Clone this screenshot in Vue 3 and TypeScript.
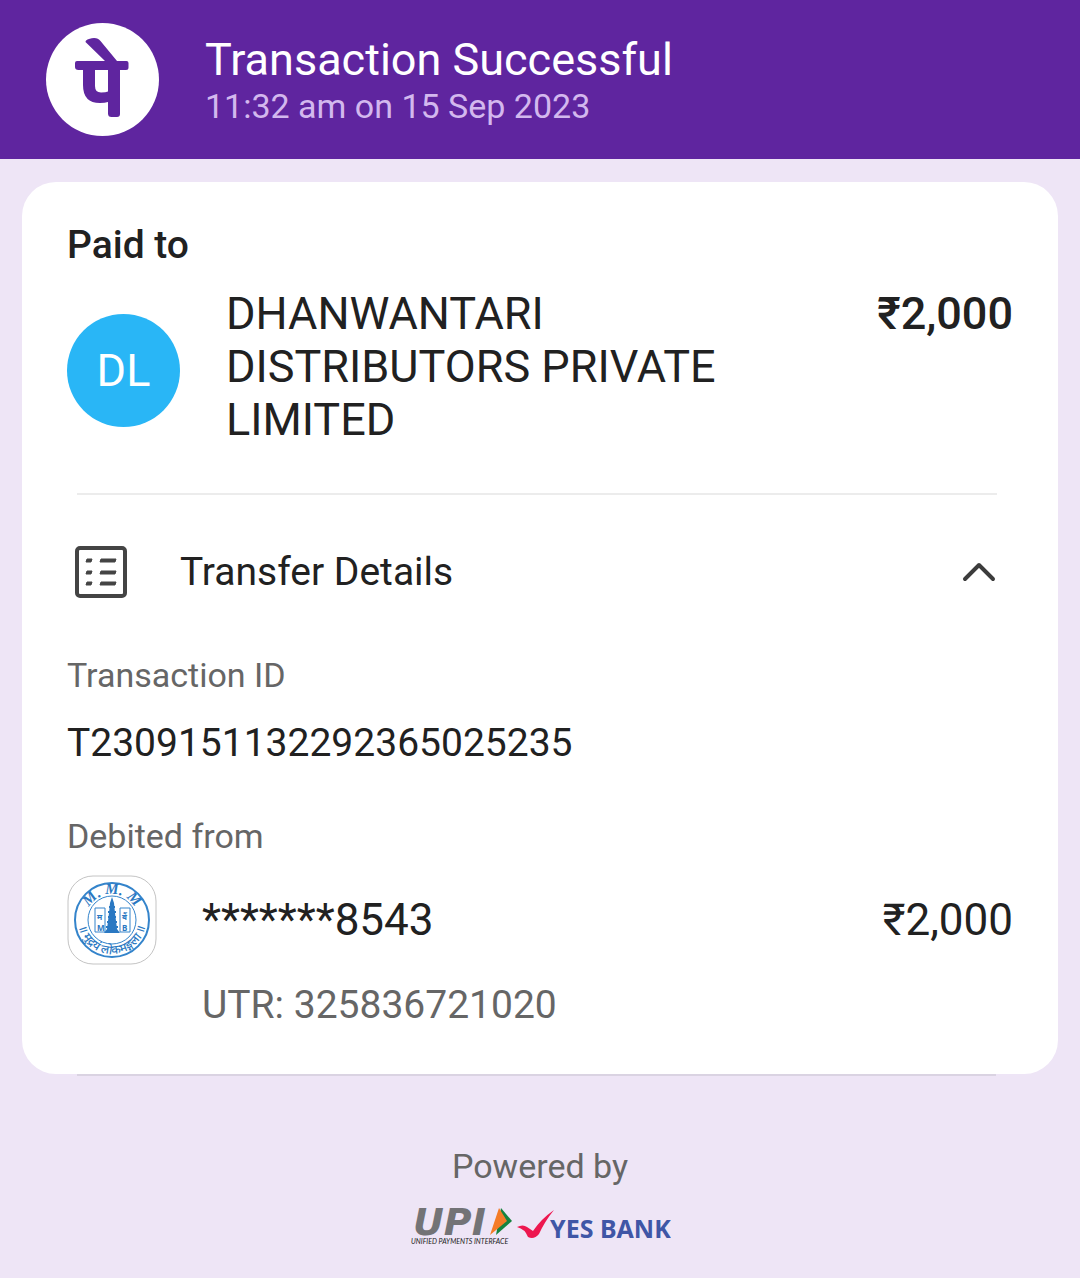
<script setup lang="ts">
import { ref } from 'vue'

const open = ref(true)

const payment = {
  status: 'Transaction Successful',
  time: '11:32 am on 15 Sep 2023',
  payee: 'DHANWANTARI DISTRIBUTORS PRIVATE LIMITED',
  initials: 'DL',
  amount: '₹2,000',
  id: 'T2309151132292365025235',
  account: '*******8543',
  utr: 'UTR: 325836721020',
}
</script>

<template>
  <div class="page">
    <header class="header">
      <svg class="brand" viewBox="0 0 226 226" role="img" aria-label="PhonePe">
        <circle cx="113" cy="113" r="113" fill="#fff" />
        <path fill="#5f259f" d="M79 38 Q79 34 86 32 Q102 27 109 36 L142 76 H161 Q165 76 165 80 V89 Q165 94 160 94 H148 V182 Q148 188 142 188 H131 Q124 188 124 181 V158 Q118 160 108 160 Q74 160 74 124 V94 H65 Q58 94 58 88 V80 Q58 76 62 76 H118 Z M98 94 V126 Q98 139 110 139 Q120 139 124 137 V94 Z" />
      </svg>
      <div>
        <h1 class="status">{{ payment.status }}</h1>
        <p class="time">{{ payment.time }}</p>
      </div>
    </header>

    <main class="card">
      <h2 class="paid">Paid to</h2>
      <div class="payee">
        <span class="avatar">{{ payment.initials }}</span>
        <p class="name">{{ payment.payee }}</p>
        <strong class="amount">{{ payment.amount }}</strong>
      </div>

      <hr class="rule" />
      <button class="toggle" type="button" :aria-expanded="open" @click="open = !open">
        <svg width="52" height="52" viewBox="0 0 52 52" aria-hidden="true">
          <rect x="2" y="2" width="48" height="48" rx="3" fill="none" stroke="#444" stroke-width="4" />
          <g fill="#444" stroke="#444" stroke-linejoin="round">
            <path v-for="y in [13, 25, 36]" :key="y" :d="`M12 ${y} h5 l-1 3 h-5 z M26 ${y} h15 l-1 3 h-15 z`" />
          </g>
        </svg>
        <span class="toggle-text">Transfer Details</span>
        <svg class="chevron" :class="{ closed: !open }" width="34" height="22" viewBox="0 0 34 22" aria-hidden="true">
          <path d="M3 18 L17 4 L31 18" fill="none" stroke="#3c3c3c" stroke-width="4" stroke-linecap="round" stroke-linejoin="round" />
        </svg>
      </button>

      <div v-if="open" class="details">
        <p class="label">Transaction ID</p>
        <p class="id">{{ payment.id }}</p>
        <p class="label">Debited from</p>
        <div class="source">
          <svg class="seal" viewBox="0 0 90 90" role="img" aria-label="Bank of Maharashtra">
            <rect x="1" y="1" width="88" height="88" rx="25" fill="#fff" stroke="#c4c4c4" />
            <g fill="none" stroke="#3484cb">
              <circle cx="45" cy="45" r="37" stroke-width="2" />
              <circle cx="45" cy="45" r="24" />
              <path d="M28 33 h10 v24 h-10 z M53 33 h10 v24 h-10 z" />
            </g>
            <path d="M45 22 l2 6 l1 10 l2 16 l3 4 h-16 l3 -4 l2 -16 l1 -10 z" fill="#2a78c2" />
            <path d="M42 32 h6 M41 37 h8 M41 42 h8 M40 47 h10 M39 52 h12" stroke="#2a78c2" stroke-width="2" />
            <defs>
              <path id="seal-low" d="M11 45 A34 34 0 0 0 79 45" />
              <path id="seal-high" d="M19 45 A26 26 0 0 1 71 45" />
            </defs>
            <g class="seal-text">
              <text x="30" y="56">M</text>
              <text x="55" y="56">B</text>
              <text x="30" y="45">म</text>
              <text x="55" y="45">बैं</text>
              <text class="crest"><textPath href="#seal-high" startOffset="50%" text-anchor="middle">M. M. M</textPath></text>
              <text class="motto"><textPath href="#seal-low" startOffset="50%" text-anchor="middle">॥ मुद्रयं लोकमङ्गला ॥</textPath></text>
            </g>
          </svg>
          <span class="account">{{ payment.account }}</span>
          <span class="debit">{{ payment.amount }}</span>
        </div>
        <p class="utr">{{ payment.utr }}</p>
      </div>
    </main>
    <hr class="edge" />

    <footer class="footer">
      <p class="powered">Powered by</p>
      <svg class="partners" width="262" height="60" viewBox="0 -10 262 60">
        <text class="upi" x="4" y="29">UPI</text>
        <path d="M92 2 L103 15 L87 29 Z" fill="#15833f" />
        <path d="M90 2 L98 15 L81 29 Z" fill="#f47b27" />
        <text class="upi-name" x="2" y="38">UNIFIED PAYMENTS INTERFACE</text>
        <path d="M108 21 Q114 18 118 21 L124 25 Q132 13 145 4 Q136 15 130 28 Q125 34 119 31 Q116 23 108 21 Z" fill="#ed174f" />
        <text class="yes" x="141" y="32">YES BANK</text>
      </svg>
    </footer>
  </div>
</template>

<style>
body {
  margin: 0;
  background: #eee5f6;
}
</style>

<style scoped>
.page {
  font-family: Roboto, "Noto Sans", sans-serif;
  color: #212121;
}
h1, h2, p {
  margin: 0;
  font-weight: 400;
}
.header {
  display: flex;
  align-items: center;
  gap: 46px;
  padding: 23px 46px;
  background: #5f259f;
}
.brand {
  width: 113px;
  height: 113px;
  flex: none;
}
.status {
  font-size: 45px;
  line-height: 53px;
  color: #fff;
}
.time {
  font-size: 34px;
  line-height: 40px;
  color: #d3b8ee;
}
.card {
  margin: 23px 22px 0;
  padding: 40px 45px 46px;
  border-radius: 34px;
  background: #fff;
}
.paid {
  font-size: 39px;
  line-height: 46px;
  font-weight: 500;
}
.payee {
  display: flex;
  align-items: flex-start;
  gap: 46px;
  padding: 19px 0 47px;
}
.avatar {
  display: flex;
  flex: none;
  align-items: center;
  justify-content: center;
  width: 113px;
  height: 113px;
  margin-top: 27px;
  border-radius: 50%;
  background: #29b6f6;
  color: #fff;
  font-size: 45px;
}
.name {
  flex: 1;
  max-width: 520px;
  font-size: 45px;
  line-height: 53px;
}
.amount {
  margin-left: auto;
  font-size: 45px;
  line-height: 53px;
  font-weight: 500;
}
.rule {
  margin: 0 16px 0 10px;
  border: 0;
  border-top: 2px solid #ececec;
}
.toggle {
  display: flex;
  align-items: center;
  width: 100%;
  padding: 51px 17px 49px 8px;
  border: 0;
  background: none;
  color: inherit;
  font: inherit;
  text-align: left;
}
.toggle svg {
  flex: none;
}
.toggle-text {
  flex: 1;
  margin-left: 53px;
  font-size: 39px;
  line-height: 46px;
}
.closed {
  transform: rotate(180deg);
}
.label {
  font-size: 34px;
  line-height: 40px;
  color: #666;
}
.details {
  padding-top: 8px;
}
.id {
  padding: 25px 0 50px;
  font-size: 39px;
  line-height: 46px;
}
.source {
  display: flex;
  align-items: center;
  gap: 45px;
  padding-top: 19px;
}
.seal {
  width: 90px;
  height: 90px;
  flex: none;
}
.seal-text {
  fill: #2a78c2;
  font: 700 8px "Noto Sans", sans-serif;
}
.crest {
  font: italic 700 15px "Liberation Serif", serif;
}
.motto {
  font-size: 12px;
  font-weight: 500;
}
.account,
.debit {
  font-size: 44px;
  line-height: 53px;
}
.debit {
  margin-left: auto;
}
.utr {
  padding: 17px 0 0 135px;
  font-size: 39px;
  line-height: 46px;
  color: #666;
}
.edge {
  margin: 0 84px 0 77px;
  border: 0;
  border-top: 2px solid #dad3e2;
}
.footer {
  display: flex;
  flex-direction: column;
  align-items: center;
  padding: 70px 0 12px;
}
.powered {
  font-size: 34px;
  line-height: 40px;
  color: #666;
}
.partners {
  margin-top: 10px;
}
.upi {
  fill: #737376;
  font: italic 700 38px "DejaVu Sans", sans-serif;
}
.upi-name {
  fill: #222;
  font: italic 400 7px Lato, sans-serif;
}
.yes {
  fill: #3f56a6;
  font: 700 25px "Noto Sans", sans-serif;
}
</style>
